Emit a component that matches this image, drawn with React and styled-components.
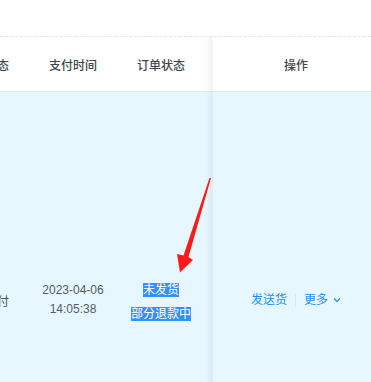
import React from "react";
import styled, { createGlobalStyle } from "styled-components";

const Global = createGlobalStyle`
  html, body {
    margin: 0;
    padding: 0;
    background: #ffffff;
    overflow: hidden;
  }
  body {
    font-family: "Liberation Sans", "Noto Sans CJK SC", sans-serif;
    font-size: 12px;
    color: #555b66;
  }
`;

const Page = styled.div`
  position: relative;
  width: 371px;
  height: 382px;
  overflow: hidden;
  background: #ffffff;
`;

const TopBar = styled.div`
  height: 36px;
  border-bottom: 1px dashed #e3e3e3;
`;

const Table = styled.div`
  display: flex;
  width: 379px;
`;

const ScrollPane = styled.div`
  flex: none;
  width: 213px;
  overflow: hidden;
  display: flex;
  justify-content: flex-end;
`;

const Grid = styled.div`
  flex: none;
  display: grid;
  grid-template-columns: 88px 88px 88px 8px;
`;

const HeadCell = styled.div`
  height: 54px;
  border-bottom: 1px solid #e8e8e8;
  background: #ffffff;
  display: flex;
  align-items: center;
  justify-content: center;
  white-space: nowrap;
  color: #40444b;
  font-weight: 500;
  font-size: 12px;
`;

const BodyCell = styled.div`
  height: 416px;
  background: #e6f7ff;
  display: flex;
  flex-direction: column;
  align-items: center;
  justify-content: center;
  white-space: nowrap;
  padding-top: ${(p) => p.$shift || 0}px;
  box-sizing: border-box;
  color: ${(p) => (p.$dark ? "#4a4e55" : "#555b66")};
`;

const DateLine = styled.div`
  line-height: 19px;
`;

const StatusLine = styled.div`
  line-height: 24px;
`;

const Selected = styled.span`
  background: #3390ff;
  color: #ffffff;
`;

const FixedPane = styled.div`
  position: relative;
  flex: none;
  width: 166px;
  display: flex;
  flex-direction: column;

  &::before {
    content: "";
    position: absolute;
    top: 0;
    bottom: 0;
    left: -8px;
    width: 8px;
    background: linear-gradient(to right, rgba(0, 0, 0, 0), rgba(0, 0, 0, 0.05));
  }
`;

const Actions = styled.div`
  display: flex;
  align-items: center;
  gap: 8px;
  color: #1890ff;
  line-height: 18px;
`;

const Link = styled.span`
  display: inline-flex;
  align-items: center;
  gap: 5px;
  color: #1890ff;
`;

const Divider = styled.span`
  width: 1px;
  height: 13px;
  background: #dfe5ea;
`;

const Arrow = styled.svg`
  position: absolute;
  left: 0;
  top: 0;
  pointer-events: none;
`;

export default function App() {
  return (
    <>
      <Global />
      <Page>
        <TopBar />
        <Table>
          <ScrollPane>
            <Grid>
              <HeadCell>支付状态</HeadCell>
              <HeadCell>支付时间</HeadCell>
              <HeadCell>订单状态</HeadCell>
              <HeadCell />
              <BodyCell $dark>在线支付</BodyCell>
              <BodyCell>
                <DateLine>2023-04-06</DateLine>
                <DateLine>14:05:38</DateLine>
              </BodyCell>
              <BodyCell $shift={4}>
                <StatusLine><Selected>未发货</Selected></StatusLine>
                <StatusLine><Selected>部分退款中</Selected></StatusLine>
              </BodyCell>
              <BodyCell />
            </Grid>
          </ScrollPane>
          <FixedPane>
            <HeadCell>操作</HeadCell>
            <BodyCell>
              <Actions>
                <Link>发送货</Link>
                <Divider />
                <Link>
                  更多
                  <svg width="8" height="6" viewBox="0 0 8 6">
                    <path d="M1 1.5 L4 4.5 L7 1.5" fill="none" stroke="#1890ff" strokeWidth="1.2" />
                  </svg>
                </Link>
              </Actions>
            </BodyCell>
          </FixedPane>
        </Table>
        <Arrow width="371" height="382" viewBox="0 0 371 382">
          <polygon
            points="211,178 188.5,257 193,260 180,272.5 177,254 183.5,255.5 209.5,178"
            fill="#ff1a1a"
          />
        </Arrow>
      </Page>
    </>
  );
}
